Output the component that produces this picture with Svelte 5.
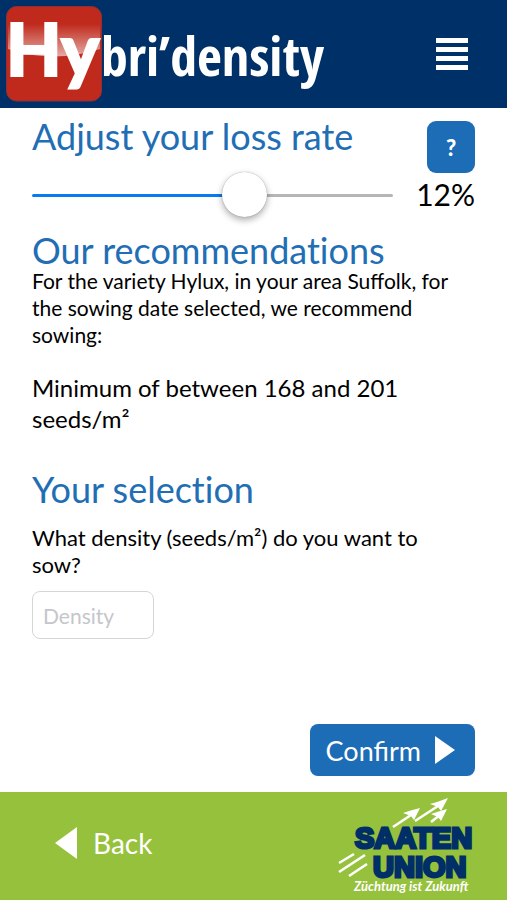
<script>
  let loss = $state(12);
  let density = $state('');
  const max = 20;
  let fill = $derived((loss / max) * 100);
</script>

<div class="page">
  <header>
    <svg class="brand" viewBox="0 0 330 108" role="img" aria-label="Hybri’density">
      <defs>
        <linearGradient id="gloss" x1="0" y1="0" x2="0" y2="1">
          <stop offset="0" stop-color="#fff" stop-opacity="0" />
          <stop offset="1" stop-color="#fff" stop-opacity="0.6" />
        </linearGradient>
      </defs>
      <rect x="6.5" y="6.5" width="95" height="94.5" rx="10" fill="#bf2a1c" stroke="#8f3038" />
      <path d="M8 24H100V49Q54 64 8 49Z" fill="url(#gloss)" />
      <text class="hy" x="6" y="76">Hy</text>
      <text class="bri" x="101" y="76">bri’density</text>
    </svg>
    <button class="menu" aria-label="Menu">
      <span></span><span></span><span></span><span></span>
    </button>
  </header>

  <main>
    <section class="loss">
      <div class="control">
        <h2><label for="loss">Adjust your loss rate</label></h2>
        <input id="loss" type="range" min="0" {max} bind:value={loss} style:--fill="{fill}%" />
      </div>
      <div class="side">
        <button class="help" aria-label="Help">?</button>
        <output for="loss">{loss}%</output>
      </div>
    </section>

    <section class="advice">
      <h2>Our recommendations</h2>
      <p>For the variety Hylux, in your area Suffolk, for the sowing date selected, we recommend sowing:</p>
      <p class="result">Minimum of between 168 and 201 seeds/m²</p>
    </section>

    <section class="selection">
      <h2>Your selection</h2>
      <label for="density">What density (seeds/m²) do you want to sow?</label>
      <input id="density" type="text" placeholder="Density" bind:value={density} />
    </section>

    <button class="confirm">
      Confirm
      <svg width="20" height="28" viewBox="0 0 20 28" aria-hidden="true"><path d="M0 0L20 14L0 28Z" fill="#fff" /></svg>
    </button>
  </main>

  <footer>
    <button class="back">
      <svg width="22" height="32" viewBox="0 0 22 32" aria-hidden="true"><path d="M22 0V32L0 16Z" fill="#fff" /></svg>
      Back
    </button>
    <svg class="union" viewBox="0 0 140 100" role="img" aria-label="Saaten Union, Züchtung ist Zukunft">
      <text class="name" x="16" y="52">SAATEN</text>
      <text class="name" x="34" y="81">UNION</text>
      <g stroke="#fff" stroke-width="2.6" fill="none">
        <path d="M54 31L72 19M76 25L99 10M92 26L101 19" />
        <path d="M0 67L15 58M0 76L26 59M10 80L28 68" />
      </g>
      <g fill="#fff">
        <path d="M81 12L75 24L72 20L64 17L70 15Z" />
        <path d="M109 2L102 15L99 11L91 8L98 6Z" />
        <path d="M108 13L102 25L99 21L92 18L98 16Z" />
      </g>
      <text class="motto" x="15" y="95">Züchtung ist Zukunft</text>
    </svg>
  </footer>
</div>

<style>
  :global(body) { margin: 0; }
  .page {
    min-height: 100vh;
    display: flex;
    flex-direction: column;
    background: #fff;
    color: #000;
    font-family: "Gill Sans", Lato, sans-serif;
    font-size: 22px;
    line-height: 27px;
  }
  button { border: 0; padding: 0; font: inherit; color: #fff; cursor: pointer; }
  h2, p { margin: 0; }
  h2 {
    font-size: 36px;
    line-height: 44px;
    font-weight: 400;
    font-variant-ligatures: none;
    color: #226eb5;
  }
  header {
    display: flex;
    align-items: center;
    justify-content: space-between;
    padding-right: 39px;
    background: #003068;
  }
  .brand { width: 330px; height: 108px; }
  .brand text { fill: #fff; }
  .hy { font: 900 72px Lato, sans-serif; stroke: #fff; stroke-width: 2px; }
  .bri { font: 700 54px "Open Sans Condensed", "Roboto Condensed", sans-serif; }
  .menu { display: flex; flex-direction: column; gap: 4px; background: none; }
  .menu span { width: 32px; height: 5px; background: #fff; }
  main {
    flex: 1;
    display: flex;
    flex-direction: column;
    padding: 0 32px 16px;
  }
  .loss { display: flex; justify-content: space-between; gap: 22px; padding-top: 6px; }
  .control { flex: 1; }
  .loss h2 { margin-bottom: 15px; }
  #loss {
    appearance: none;
    display: block;
    width: 100%;
    height: 45px;
    margin: 0;
    background: none;
  }
  #loss::-webkit-slider-runnable-track {
    height: 3px;
    border-radius: 2px;
    background: linear-gradient(to right, #087bf0 var(--fill), #b5b6b6 var(--fill));
  }
  #loss::-webkit-slider-thumb {
    appearance: none;
    width: 45px;
    height: 45px;
    margin-top: -22px;
    border-radius: 50%;
    background: #fff;
    box-shadow: 0 0 1px #0006, 0 3px 7px #0005;
  }
  .side { display: flex; flex-direction: column; align-items: flex-end; gap: 2px; }
  .help {
    width: 48px;
    height: 52px;
    margin-top: 7px;
    border-radius: 9px;
    background: #1d6cb6;
    font-weight: 900;
  }
  output { min-width: 60px; font-size: 30px; line-height: 38px; text-align: right; }
  .advice { padding-top: 10px; }
  .advice p { font-size: 21px; }
  .advice p:first-of-type { margin-top: -5px; }
  .advice .result { margin-top: 24px; font-size: 24px; line-height: 31px; }
  .selection { padding-top: 33px; }
  .selection label { display: block; margin: 13px 0; padding-right: 32px; }
  #density {
    box-sizing: border-box;
    display: block;
    width: 122px;
    height: 48px;
    padding: 0 10px;
    border: 1px solid #d4d5d7;
    border-radius: 8px;
    background: #fff;
    font: inherit;
    font-size: 21px;
  }
  #density::placeholder { color: #c5c6c9; }
  .confirm {
    display: flex;
    align-items: center;
    gap: 14px;
    align-self: flex-end;
    height: 52px;
    margin-top: auto;
    padding: 0 20px 0 16px;
    border-radius: 8px;
    background: #1d6cb6;
    font-size: 27px;
  }
  footer {
    display: flex;
    align-items: center;
    justify-content: space-between;
    height: 108px;
    padding: 0 28px 0 55px;
    background: #96c13c;
  }
  .back {
    display: flex;
    align-items: center;
    gap: 16px;
    padding-bottom: 6px;
    background: none;
    font-size: 28px;
  }
  .union { width: 140px; height: 100px; overflow: visible; }
  .name {
    font: 700 29px "Liberation Sans", Arial, sans-serif;
    fill: #002f67;
    stroke: #002f67;
    stroke-width: 3px;
  }
  .motto { font: italic 700 13px Lato, sans-serif; fill: #fff; }
</style>
